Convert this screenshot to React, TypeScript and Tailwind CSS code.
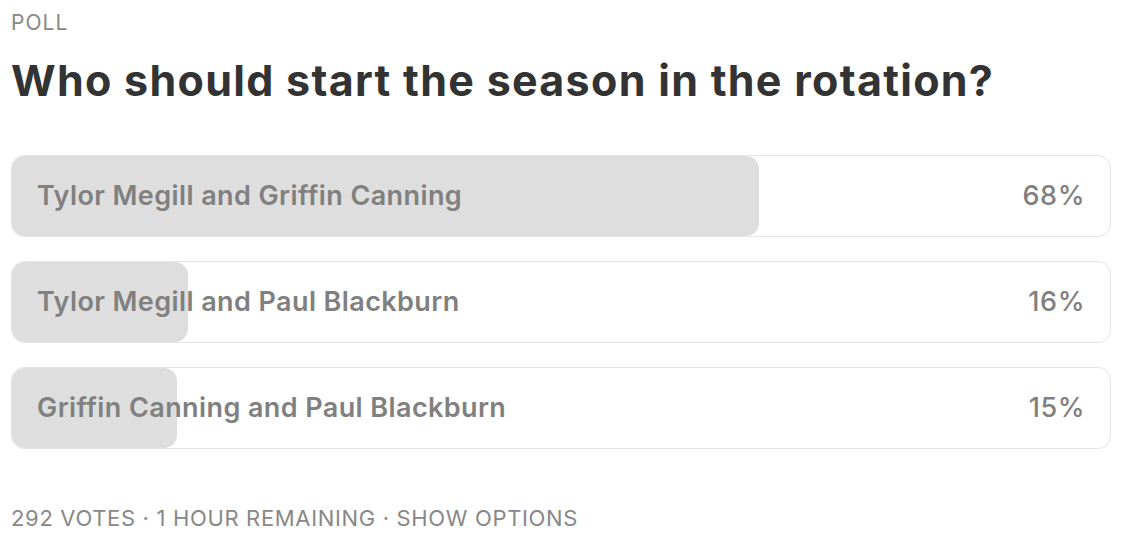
import React from "react";

type Option = { label: string; pct: number };

const options: Option[] = [
  { label: "Tylor Megill and Griffin Canning", pct: 68 },
  { label: "Tylor Megill and Paul Blackburn", pct: 16 },
  { label: "Griffin Canning and Paul Blackburn", pct: 15 },
];

function OptionBar({ option }: { option: Option }) {
  return (
    <div className="relative h-[82px] rounded-[13px] border border-[#e4e4e4] overflow-hidden bg-white">
      <div
        className="absolute inset-y-0 left-0 rounded-[13px] bg-[#dedede]"
        style={{ width: `${option.pct}%` }}
      />
      <div className="relative flex h-full items-center justify-between pl-[25px] pr-[25px]">
        <span className="text-[27px] font-semibold tracking-[0.015em] text-[#808080]">{option.label}</span>
        <span className="text-[27px] font-medium tracking-[0.02em] text-[#808080]">{option.pct}%</span>
      </div>
    </div>
  );
}

export default function App() {
  return (
    <div className="w-[1124px] h-[542px] bg-white px-[11px] pt-[9px] font-['Inter',_'Noto_Sans',_sans-serif]">
      <div className="text-[21px] leading-[28px] tracking-[0.05em] text-[#888]">POLL</div>
      <h1 className="mt-[18px] text-[43px] leading-[50px] font-bold tracking-[0.03em] text-[#333]">
        Who should start the season in the rotation?
      </h1>
      <div className="mt-[50px] flex flex-col gap-[24px] w-[1100px]">
        {options.map((o) => (
          <OptionBar key={o.label} option={o} />
        ))}
      </div>
      <div className="mt-[55px] text-[22px] leading-[28px] tracking-[0.03em] text-[#888]">
        292 VOTES · 1 HOUR REMAINING · SHOW OPTIONS
      </div>
    </div>
  );
}
